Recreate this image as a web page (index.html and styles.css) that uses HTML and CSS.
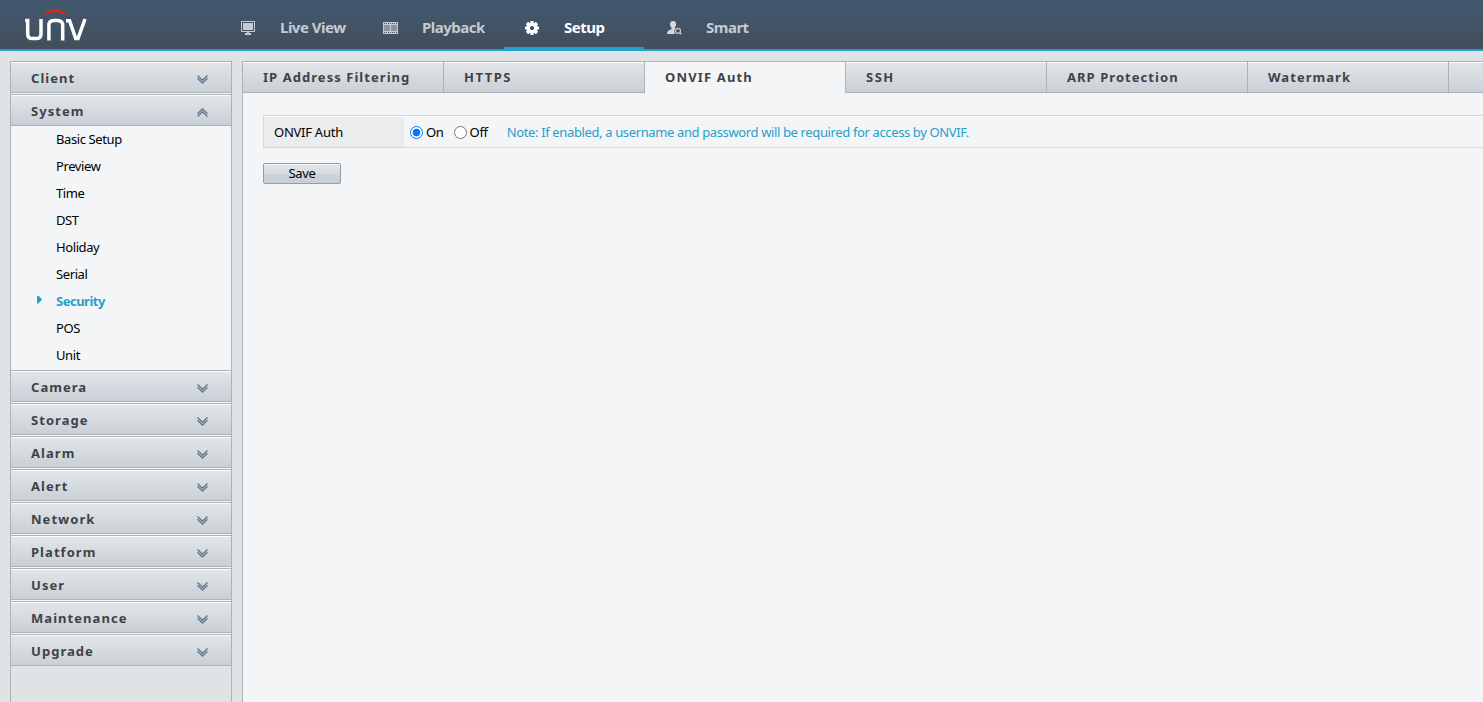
FILE: index.html
```html
<!DOCTYPE html>
<html lang="en">
<head>
<meta charset="utf-8">
<title>Setup</title>
<link rel="stylesheet" href="styles.css">
</head>
<body>
<svg class="defs" width="0" height="0">
  <symbol id="chev" viewBox="0 0 11 9"><path d="M.5 .5L5.500 5.200L10.500 .5M.5 3.300L5.500 8L10.500 3.300" fill="none" stroke="#64788b" stroke-width="1.400"/></symbol>
</svg>
<header class="top">
  <svg class="logo" width="70" height="42" viewBox="20 4 70 42">
    <path d="M42 15.500Q55 2.500 68 15.500Q55 8.500 42 15.500Z" fill="#e2231f"/>
    <g fill="none" stroke="#fff" stroke-width="3.500">
      <path d="M25.200 20.500H27.700V34Q27.700 38.600 32.500 38.600H36Q41 38.600 41 34V19"/>
      <path d="M48.900 40.500V25.500Q48.900 20.500 53.700 20.500H57.500Q62.700 20.500 62.700 25.500V40.500"/>
      <path d="M66 20.700H69.600L75.700 38.500H78L85 19"/>
    </g>
  </svg>
  <nav class="nav">
    <a class="nav-item"><svg width="16" height="16" viewBox="0 0 16 16" shape-rendering="crispEdges"><path d="M1.500 1.500H14.500V11.500H1.500Z" fill="none" stroke="#c5cbd2"/><path d="M3 3H13V10H3ZM7 12H9V13H11V15H5V13H7Z" fill="#c5cbd2"/></svg><span>Live View</span></a>
    <a class="nav-item"><svg width="16" height="16" viewBox="0 0 16 16" shape-rendering="crispEdges"><path d="M1 2H16V14H1Z" fill="#c5cbd2"/><path d="M2 5H8V11H2ZM9 5H15V11H9Z" fill="#8b949e"/><path d="M2 3.500H16M2 12.500H16" stroke="#465362" stroke-dasharray="1 1"/></svg><span>Playback</span></a>
    <a class="nav-item active"><svg width="16" height="16" viewBox="-8 -8 16 16"><g stroke="#fff" stroke-width="3.200"><path d="M0-7V-4M0 7V4M-7 0H-4M7 0H4M-5-5L-3-3M5 5L3 3M-5 5L-3 3M5-5L3-3"/></g><circle r="3.900" fill="none" stroke="#fff" stroke-width="3.600"/></svg><span>Setup</span></a>
    <a class="nav-item"><svg width="16" height="16" viewBox="0 0 16 16"><path d="M7 1C9.500 1 10.500 2.700 10 5C9.700 6.500 9 7.300 9 8.300Q7.300 11 9 14H1Q1 11 3 10.300L5.500 9.300V8Q4 6.500 4 4.300Q4 1 7 1Z" fill="#d5d9de"/><circle cx="12" cy="10.800" r="2.500" fill="none" stroke="#c5cbd2" stroke-width="1.200"/><path d="M13.700 12.500L15.300 14.200" stroke="#c5cbd2" stroke-width="1.300"/></svg><span>Smart</span></a>
  </nav>
</header>
<div class="body">
  <aside class="side">
    <div class="head"><span>Client</span><svg class="chev"><use href="#chev"/></svg></div>
    <div class="head open"><span>System</span><svg class="chev"><use href="#chev"/></svg></div>
    <ul class="menu">
      <li>Basic Setup</li><li>Preview</li><li>Time</li><li>DST</li><li>Holiday</li><li>Serial</li>
      <li class="current">Security</li><li>POS</li><li>Unit</li>
    </ul>
    <div class="head"><span>Camera</span><svg class="chev"><use href="#chev"/></svg></div>
    <div class="head"><span>Storage</span><svg class="chev"><use href="#chev"/></svg></div>
    <div class="head"><span>Alarm</span><svg class="chev"><use href="#chev"/></svg></div>
    <div class="head"><span>Alert</span><svg class="chev"><use href="#chev"/></svg></div>
    <div class="head"><span>Network</span><svg class="chev"><use href="#chev"/></svg></div>
    <div class="head"><span>Platform</span><svg class="chev"><use href="#chev"/></svg></div>
    <div class="head"><span>User</span><svg class="chev"><use href="#chev"/></svg></div>
    <div class="head"><span>Maintenance</span><svg class="chev"><use href="#chev"/></svg></div>
    <div class="head last"><span>Upgrade</span><svg class="chev"><use href="#chev"/></svg></div>
  </aside>
  <main class="main">
    <div class="tabs">
      <div class="tab">IP Address Filtering</div><div class="tab wide">HTTPS</div><div class="tab active">ONVIF Auth</div><div class="tab wide">SSH</div><div class="tab">ARP Protection</div><div class="tab">Watermark</div><div class="tab rest"></div>
    </div>
    <div class="content">
      <div class="row">
        <div class="label">ONVIF Auth</div>
        <div class="field">
          <label class="opt"><i class="radio on"></i><span>On</span></label>
          <label class="opt"><i class="radio"></i><span>Off</span></label>
          <span class="note">Note: If enabled, a username and password will be required for access by ONVIF.</span>
        </div>
      </div>
      <button class="save">Save</button>
    </div>
  </main>
</div>
</body>
</html>
```

FILE: styles.css
```css
* { box-sizing: border-box; }
body {
  margin: 0;
  height: 702px;
  overflow: hidden;
  display: flex;
  flex-direction: column;
  background: #dfe3e6;
  font: 13px/18px "Noto Sans", "Open Sans", sans-serif;
  color: #000;
}
.defs { position: absolute; }
.top {
  display: flex;
  flex: none;
  height: 51px;
  padding-left: 20px;
  background: linear-gradient(#43596f, #414e5b);
  border-bottom: 2px solid #27a0c9;
}
.logo { margin-top: 4px; flex: none; }
.nav { display: flex; margin-left: 130px; gap: 2px; }
.nav-item {
  display: flex;
  align-items: center;
  width: 140px;
  height: 49px;
  padding: 7px 0 0 20px;
  border-bottom: 2px solid transparent;
  color: #c5cbd2;
  font-size: 15px;
  font-weight: bold;
  letter-spacing: -.5px;
  white-space: nowrap;
}
.nav-item svg { margin-top: 2px; }
.nav-item span { margin-left: 24px; }
.nav-item.active { color: #fff; border-color: #27a0c9; }
.body { flex: 1; display: flex; padding: 10px 0 0 10px; min-height: 0; }
.side {
  width: 222px;
  flex: none;
  margin-right: 10px;
  border: solid #aeb2b5;
  border-width: 0 1px;
}
.head, .tab {
  background: linear-gradient(#e3e6e8, #c8d0d7);
  border: solid #aeb2b5;
  font-weight: bold;
  color: #3f4347;
  letter-spacing: 1.05px;
}
.head {
  display: flex;
  justify-content: space-between;
  align-items: center;
  height: 32px;
  margin-bottom: 1px;
  padding: 2px 23px 0 20px;
  border-width: 1px 0;
  box-shadow: inset 0 1px #fafbfb, 0 1px #f6f7f8;
}
.head.open { margin-bottom: 0; box-shadow: inset 0 1px #fafbfb; }
.head.last { box-shadow: inset 0 1px #fafbfb; }
.chev { width: 11px; height: 9px; margin-top: 3px; }
.open .chev { transform: scaleY(-1); }
.menu {
  height: 244px;
  margin: 0;
  padding: 0;
  list-style: none;
  background: #f4f5f7;
}
.menu li {
  display: flex;
  align-items: center;
  height: 27px;
  padding: 0 0 2px 45px;
  letter-spacing: -.4px;
}
.menu .current {
  padding-left: 26px;
  color: #27a0c9;
  font-weight: bold;
  letter-spacing: -.5px;
}
.current::before {
  content: "";
  width: 5px;
  height: 8px;
  margin: -2px 14px 0 0;
  background: #27a0c9;
  clip-path: polygon(0 0, 30% 0, 100% 50%, 30% 100%, 0 100%);
}
.main {
  flex: 1;
  min-width: 0;
  border-left: 1px solid #aeb2b5;
  background: #f4f5f7;
}
.tabs { display: flex; height: 32px; }
.tab {
  flex: none;
  width: 201px;
  padding: 6px 0 0 20px;
  border-width: 1px 1px 1px 0;
  box-shadow: inset 0 1px #fafbfb;
}
.tab.wide { letter-spacing: 1.5px; }
.tab.active { background: none; border-bottom-color: transparent; box-shadow: none; letter-spacing: 1.15px; }
.tab.rest { flex: 1; width: auto; border-right: 0; }
.content { padding: 22px 0 0 20px; }
.row {
  display: flex;
  height: 33px;
  border: solid #d6d8da;
  border-width: 1px 0 1px 1px;
  box-shadow: inset 0 1px #fff;
}
.label {
  width: 140px;
  margin-top: 1px;
  padding: 6px 0 0 10px;
  background: #ebecee;
  letter-spacing: -.25px;
}
.field { display: flex; align-items: center; padding: 2px 0 0 6px; }
.opt { display: flex; align-items: center; margin-right: 10px; }
.opt span { margin: -2px 0 0 3px; letter-spacing: -.3px; }
.radio {
  width: 13px;
  height: 13px;
  border: 1px solid #767676;
  border-radius: 50%;
  background: #fff;
}
.radio.on {
  border-color: #0075ff;
  background: radial-gradient(circle, #0075ff 3.5px, #fff 4.2px);
}
.note {
  margin: -2px 0 0 9px;
  color: #27a0c9;
  letter-spacing: -.37px;
  white-space: nowrap;
}
.save {
  display: block;
  width: 78px;
  height: 21px;
  margin-top: 15px;
  padding: 0 0 2px;
  border: 1px solid #969da3;
  border-radius: 2px;
  background: linear-gradient(#e3e6e8, #d8dce1 50%, #ccd3d9 51%, #c8d0d7);
  box-shadow: inset 0 1px #f4f5f6;
  font: inherit;
  letter-spacing: -.3px;
  color: #000;
}
```
